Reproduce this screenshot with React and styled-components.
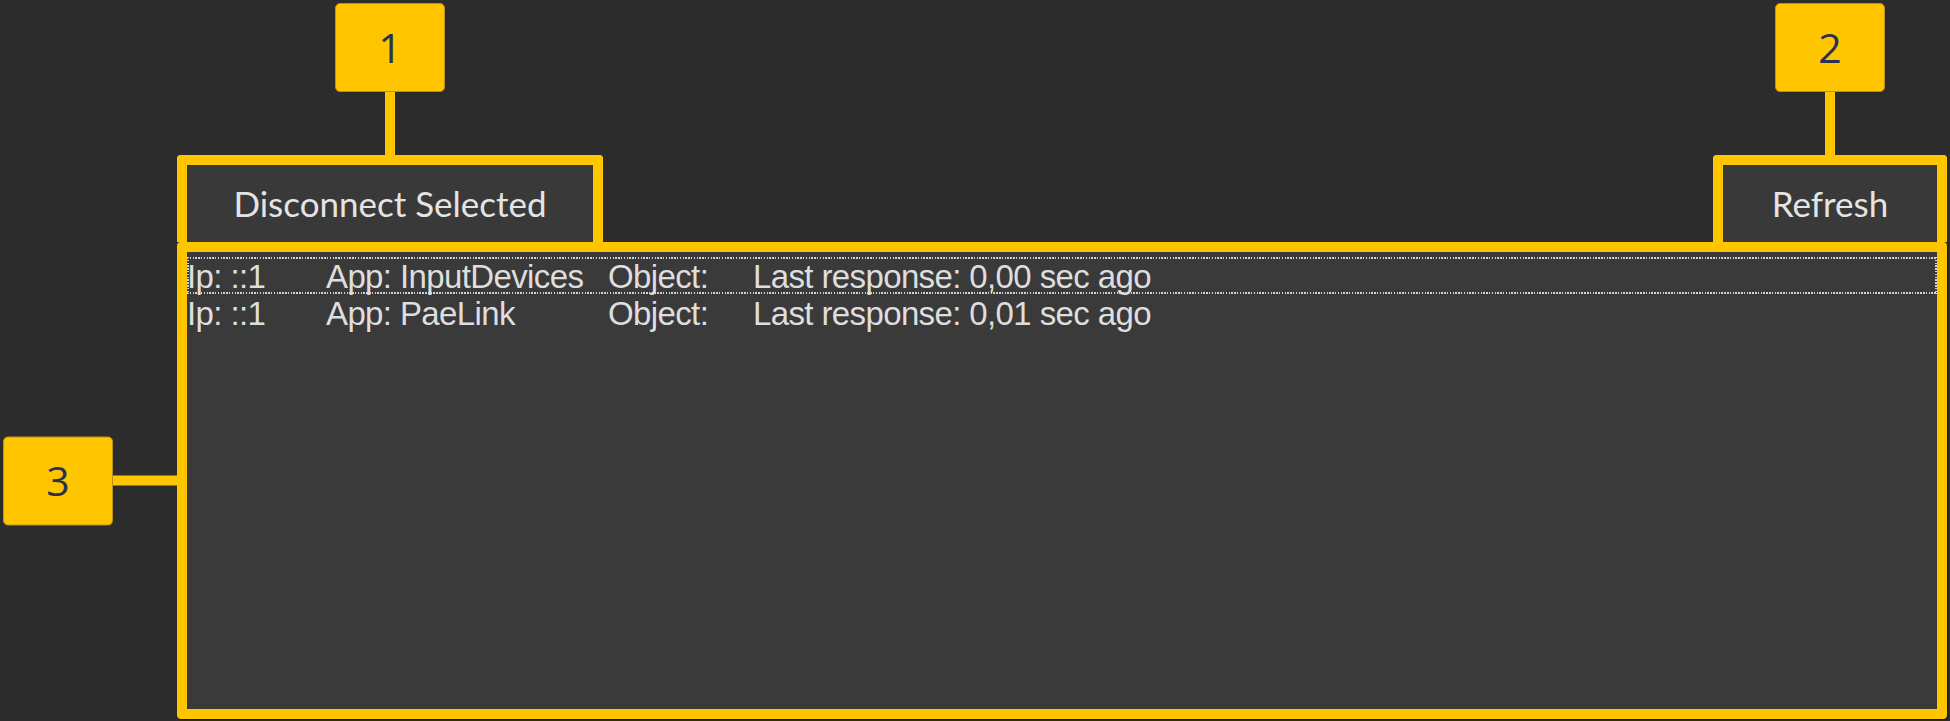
import React from 'react';
import styled, { createGlobalStyle } from 'styled-components';

// global page reset
const GlobalStyle = createGlobalStyle`
  html, body {
    margin: 0;
    padding: 0;
    background: #2c2c2c;
  }
  body {
    width: 1950px;
    height: 721px;
    overflow: hidden;
  }
`;

const YELLOW = '#ffc600';
const DOTS_X = 'repeating-linear-gradient(90deg, #d2d2d2 0 1.5px, transparent 1.5px 2.8px)';
const DOTS_Y = 'repeating-linear-gradient(180deg, #d2d2d2 0 1.5px, transparent 1.5px 2.8px)';

// styled components
const Page = styled.div`
  box-sizing: border-box;
  width: 1950px;
  height: 721px;
  padding: 155px 3px 2px 177px;
  display: flex;
  flex-direction: column;
  background: #2c2c2c;
`;

const Toolbar = styled.div`
  display: flex;
  justify-content: space-between;
  align-items: flex-end;
`;

const ButtonFrame = styled.div`
  position: relative;
  box-sizing: border-box;
  width: ${(p) => p.$width}px;
  height: 87px;
  border: 10px solid ${YELLOW};
  border-bottom: none;
  border-radius: 4px 4px 0 0;
`;

const ToolButton = styled.button`
  width: 100%;
  height: 100%;
  margin: 0;
  padding: 0 0 2px;
  border: none;
  background: #393939;
  color: #e4e4e4;
  font-family: Lato, 'Open Sans', sans-serif;
  font-size: 35px;
  display: flex;
  align-items: center;
  justify-content: center;
`;

const ListFrame = styled.div`
  position: relative;
  flex: 1;
  box-sizing: border-box;
  border: 10px solid ${YELLOW};
  border-radius: 4px;
  background: #3a3a3a;
  padding-top: 5px;
  box-shadow: 1px 1px 1px rgba(0, 0, 0, 0.45);
`;

const Row = styled.div`
  display: grid;
  grid-template-columns: 137px 282px 145px 1fr;
  height: 37px;
  box-sizing: border-box;
  padding: 2px 1px 2px 2px;
  font-family: 'Liberation Sans', Arial, sans-serif;
  font-size: 33px;
  letter-spacing: -0.62px;
  line-height: 36px;
  color: #dedede;
  white-space: nowrap;
  ${(p) =>
    p.$focused &&
    `background:
      ${DOTS_X} left top / 100% 2px no-repeat,
      ${DOTS_X} left bottom / 100% 2px no-repeat,
      ${DOTS_Y} left top / 2px 100% no-repeat,
      ${DOTS_Y} right top / 2px 100% no-repeat;`}
`;

const Cell = styled.span`
  margin-left: ${(p) => p.$shift || 0}px;
`;

// annotation callouts
const Callout = styled.div`
  position: absolute;
  display: flex;
  align-items: center;
  flex-direction: ${(p) => (p.$side === 'left' ? 'row' : 'column')};
  ${(p) =>
    p.$side === 'left'
      ? `right: calc(100% + 10px); top: 50%; transform: translateY(-50%);`
      : `bottom: calc(100% + 10px); left: 50%; transform: translateX(-50%);`}
`;

const Badge = styled.div`
  box-sizing: border-box;
  width: 110px;
  height: 89px;
  border-radius: 5px;
  background: ${YELLOW};
  border: 1px solid #b8921a;
  color: #2b3152;
  font-family: 'Open Sans', 'Noto Sans', sans-serif;
  font-size: 41px;
  display: flex;
  align-items: center;
  justify-content: center;
  padding-bottom: 2px;
`;

const Stem = styled.div`
  background: ${YELLOW};
  width: ${(p) => (p.$side === 'left' ? '64px' : '10px')};
  height: ${(p) => (p.$side === 'left' ? '10px' : '63px')};
`;

const connections = [
  { ip: 'Ip: ::1', app: 'App: InputDevices', object: 'Object:', last: 'Last response: 0,00 sec ago' },
  { ip: 'Ip: ::1', app: 'App: PaeLink', object: 'Object:', last: 'Last response: 0,01 sec ago' },
];

const Marker = ({ label, side }) => (
  <Callout $side={side}>
    <Badge>{label}</Badge>
    <Stem $side={side} />
  </Callout>
);

// component definition
const App = () => {
  return (
    <>
      <GlobalStyle />
      <Page>
        <Toolbar>
          <ButtonFrame $width={426}>
            <Marker label="1" side="up" />
            <ToolButton>Disconnect Selected</ToolButton>
          </ButtonFrame>
          <ButtonFrame $width={234}>
            <Marker label="2" side="up" />
            <ToolButton>Refresh</ToolButton>
          </ButtonFrame>
        </Toolbar>
        <ListFrame>
          <Marker label="3" side="left" />
          {connections.map((c, i) => (
            <Row key={i} $focused={i === 0}>
              <Cell $shift={-2}>{c.ip}</Cell>
              <Cell>{c.app}</Cell>
              <Cell>{c.object}</Cell>
              <Cell>{c.last}</Cell>
            </Row>
          ))}
        </ListFrame>
      </Page>
    </>
  );
};

export default App;
